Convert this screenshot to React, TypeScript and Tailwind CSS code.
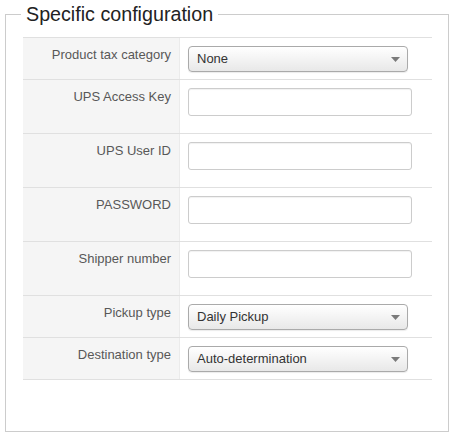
import React from "react";

type Row = { label: string; kind: "select" | "input"; value?: string; h: string };

const rows: Row[] = [
  { label: "Product tax category", kind: "select", value: "None", h: "h-[42px]" },
  { label: "UPS Access Key", kind: "input", h: "h-[54px]" },
  { label: "UPS User ID", kind: "input", h: "h-[54px]" },
  { label: "PASSWORD", kind: "input", h: "h-[54px]" },
  { label: "Shipper number", kind: "input", h: "h-[54px]" },
  { label: "Pickup type", kind: "select", value: "Daily Pickup", h: "h-[42px]" },
  { label: "Destination type", kind: "select", value: "Auto-determination", h: "h-[42px]" },
];

function FakeSelect({ value }: { value: string }) {
  return (
    <div className="flex items-center justify-between w-[220px] h-[26px] border border-[#aaaaaa] rounded-[4px] bg-gradient-to-b from-[#ffffff] to-[#e8e8e8] shadow-[0_1px_1px_rgba(0,0,0,0.08)] pl-[8px] pr-[7px]">
      <span className="text-[13px] leading-[16px] text-[#333333]">{value}</span>
      <svg width="9" height="5" viewBox="0 0 9 5" className="block">
        <polygon points="0,0 9,0 4.5,5" fill="#7a7a7a" />
      </svg>
    </div>
  );
}

export default function App() {
  return (
    <div className="w-[453px] h-[436px] bg-white font-['Liberation_Sans',Arial,sans-serif]">
      <fieldset className="ml-[5px] mt-[3px] w-[444px] h-[429px] border border-[#cccccc] pl-[17px] pr-[16px] pt-[12px]">
        <legend className="ml-[-2px] px-[5px] text-[19.7px] leading-[22px] text-[#222222]">
          Specific configuration
        </legend>
        <div className="w-[409px] border-b border-[#e0e0e0]">
          {rows.map((r) => (
            <div key={r.label} className={`flex border-t border-[#e0e0e0] ${r.h}`}>
              <div className="w-[157px] bg-[#f5f5f5] border-r border-[#ebebeb] pr-[8px] pt-[9px] text-right text-[13px] leading-[16px] text-[#585858]">
                {r.label}
              </div>
              <div className="flex-1 pl-[8px] pt-[8px]">
                {r.kind === "select" ? (
                  <FakeSelect value={r.value!} />
                ) : (
                  <div className="w-[224px] h-[28px] border border-[#cccccc] rounded-[3px] bg-white shadow-[inset_0_1px_1px_rgba(0,0,0,0.06)]" />
                )}
              </div>
            </div>
          ))}
        </div>
      </fieldset>
    </div>
  );
}
